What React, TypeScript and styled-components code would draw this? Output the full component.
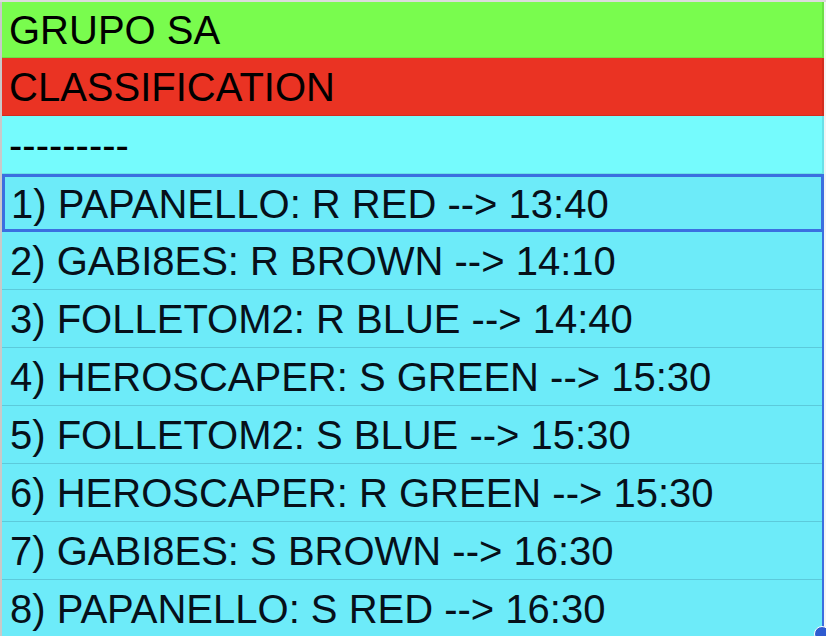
import React from "react";
import styled, { createGlobalStyle } from "styled-components";

const Global = createGlobalStyle`
  html, body { margin: 0; padding: 0; background: #f2f2f2; }
  body { font-family: "Liberation Sans", Arial, sans-serif; }
`;

const Page = styled.div`
  width: 826px;
  height: 636px;
  overflow: hidden;
  position: relative;
  background: #f4f4f4;
  border-top: 2px solid #dcdcdc;
  box-sizing: border-box;
  display: flex;
  align-items: flex-start;
`;

const LeftEdge = styled.div`
  width: 2px;
  height: 100%;
  flex: none;
  background: #c9c9c9;
`;

const Panel = styled.div`
  width: 822px;
  flex: none;
  display: flex;
  flex-direction: column;
`;

const Band = styled.div<{ $bg: string; $edge: string; $h: number }>`
  flex: none;
  height: ${(p) => p.$h}px;
  box-sizing: border-box;
  background: ${(p) => p.$bg};
  border-bottom: 1px solid ${(p) => p.$edge};
  border-right: 2px solid ${(p) => p.$edge};
  display: flex;
  align-items: center;
  padding-left: 7px;
  padding-top: 1px;
  font-size: 40px;
  color: #000;
  white-space: nowrap;
`;

const List = styled.div`
  flex: none;
  display: flex;
  flex-direction: column;
  border-right: 2px solid #3b6fe0;
`;

const Row = styled.div<{ $selected?: boolean }>`
  flex: none;
  height: 58px;
  box-sizing: border-box;
  background: #6debf9;
  display: flex;
  align-items: center;
  padding-top: 2px;
  font-size: 40px;
  color: #06101a;
  white-space: nowrap;
  padding-left: ${(p) => (p.$selected ? "6px" : "8px")};
  border: ${(p) => (p.$selected ? "3px solid #3b6fe0" : "none")};
  border-bottom: ${(p) => (p.$selected ? "3px solid #3b6fe0" : "1px solid #5ccadb")};
  margin-right: ${(p) => (p.$selected ? "-2px" : "0")};
`;

const Handle = styled.div`
  position: absolute;
  right: -4px;
  bottom: -6px;
  width: 14px;
  height: 14px;
  border-radius: 50%;
  background: #2f5bd0;
  border: 1px solid #ffffff;
`;

const rows = [
  "1) PAPANELLO: R RED --> 13:40",
  "2) GABI8ES: R BROWN --> 14:10",
  "3) FOLLETOM2: R BLUE --> 14:40",
  "4) HEROSCAPER: S GREEN --> 15:30",
  "5) FOLLETOM2: S BLUE --> 15:30",
  "6) HEROSCAPER: R GREEN --> 15:30",
  "7) GABI8ES: S BROWN --> 16:30",
  "8) PAPANELLO: S RED --> 16:30",
];

export default function App() {
  return (
    <>
      <Global />
      <Page>
        <LeftEdge />
        <Panel>
          <Band $bg="#79fc4e" $edge="#6ce044" $h={56}>GRUPO SA</Band>
          <Band $bg="#ea3323" $edge="#d42c1e" $h={58}>CLASSIFICATION</Band>
          <Band $bg="#75fbfd" $edge="#6ae0e8" $h={58}>---------</Band>
          <List>
            {rows.map((r, i) => (
              <Row key={i} $selected={i === 0}>
                {r}
              </Row>
            ))}
          </List>
        </Panel>
        <Handle />
      </Page>
    </>
  );
}
